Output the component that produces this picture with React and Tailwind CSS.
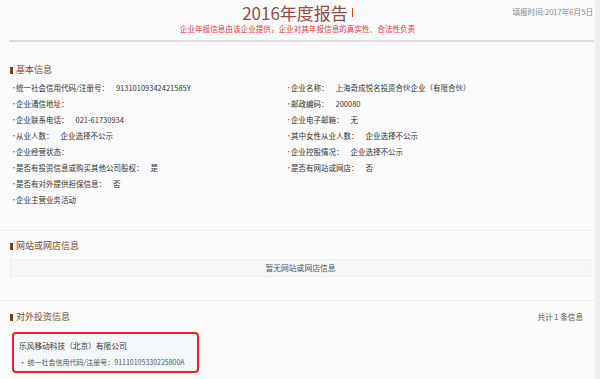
import React from 'react';

const rows = [
    [['统一社会信用代码/注册号：', '91310109342421585Y'], ['企业名称：', '上海奇成悦名投资合伙企业（有限合伙）']],
    [['企业通信地址：', ''], ['邮政编码：', '200080']],
    [['企业联系电话：', '021-61730934'], ['企业电子邮箱：', '无']],
    [['从业人数：', '企业选择不公示'], ['其中女性从业人数：', '企业选择不公示']],
    [['企业经营状态：', ''], ['企业控股情况：', '企业选择不公示']],
    [['是否有投资信息或购买其他公司股权：', '是'], ['是否有网站或网店：', '否']],
    [['是否有对外提供担保信息：', '否'], null],
    [['企业主营业务活动', ''], null],
];

const Item = ({ item }) => {
    if (!item) return <div />;
    const [label, value] = item;
    return (
        <div className="flex items-center h-[16px] text-[7.5px] leading-[10px] text-[#333] whitespace-nowrap">
            <span className="w-[6px] text-[#777]">·</span>
            <span>{label}</span>
            {value && <span className="ml-[7px]">{value}</span>}
        </div>
    );
};

const Heading = ({ children }) => (
    <div className="flex items-center h-[12px]">
        <span className="w-[3px] h-[7px] bg-[#7d3f12]" />
        <span className="ml-[3px] text-[9px] leading-[12px] text-[#7a4a30]">{children}</span>
    </div>
);

const App = () => {
    return (
        <div className="w-[600px] h-[379px] overflow-hidden flex bg-[#fafafa] font-['Noto_Sans_CJK_SC','Liberation_Sans',sans-serif]">
            <div className="flex-1 flex flex-col">
                {/* header */}
                <div className="grid grid-cols-[1fr_auto_1fr] h-[40px]">
                    <div />
                    <div className="flex flex-col items-center pt-[3px]">
                        <div className="flex items-start">
                            <h1 className="text-[17px] leading-[20px] text-[#8c4c4c]">2016年度报告</h1>
                            <span className="ml-[4px] mt-[5px] w-[1px] h-[9px] bg-[#e8333a]" />
                        </div>
                        <p className="mt-[1px] text-[7.6px] leading-[10px] text-[#e8304a] whitespace-nowrap">
                            企业年报信息由该企业提供，企业对其年报信息的真实性、合法性负责
                        </p>
                    </div>
                    <div className="flex justify-end pt-[7px] pr-[2px]">
                        <span className="text-[7.6px] leading-[10px] text-[#888] whitespace-nowrap">填报时间:2017年6月5日</span>
                    </div>
                </div>
                <div className="ml-[9px] mr-[1px] h-[2px] bg-[#dcdcdc]" />

                {/* 基本信息 */}
                <div className="pt-[22px] pb-[22px] pl-[10px] border-b border-[#ececec]">
                    <Heading>基本信息</Heading>
                    <div className="mt-[4px] grid grid-cols-[275px_1fr]">
                        {rows.map((r, i) => (
                            <React.Fragment key={i}>
                                <Item item={r[0]} />
                                <Item item={r[1]} />
                            </React.Fragment>
                        ))}
                    </div>
                </div>

                {/* 网站或网店信息 */}
                <div className="pt-[9px] pb-[23px] pl-[10px] pr-[4px] border-b border-[#ececec]">
                    <Heading>网站或网店信息</Heading>
                    <div className="mt-[7px] h-[18px] flex items-center justify-center border border-[#ededed] bg-[#f6f6f6] text-[7.8px] leading-[10px] text-[#555]">
                        暂无网站或网店信息
                    </div>
                </div>

                {/* 对外投资信息 */}
                <div className="pt-[10px] pl-[10px] pr-[12px]">
                    <div className="flex items-center justify-between">
                        <Heading>对外投资信息</Heading>
                        <span className="text-[7.6px] leading-[10px] text-[#555]">共计 1 条信息</span>
                    </div>
                    <div className="mt-[9px] ml-[2px] w-[187px] h-[41px] border-2 border-[#f0202a] rounded-[4px] bg-[#f4f7fa] pl-[5px] pt-[7px]">
                        <div className="text-[7.7px] leading-[10px] text-[#333] whitespace-nowrap">乐风移动科技（北京）有限公司</div>
                        <div className="mt-[6px] text-[7px] leading-[10px] text-[#555] whitespace-nowrap">· 统一社会信用代码/注册号：91110105330225800A</div>
                    </div>
                </div>
            </div>
            <div className="w-[5px] bg-[#efefef]" />
        </div>
    );
};

export default App;
